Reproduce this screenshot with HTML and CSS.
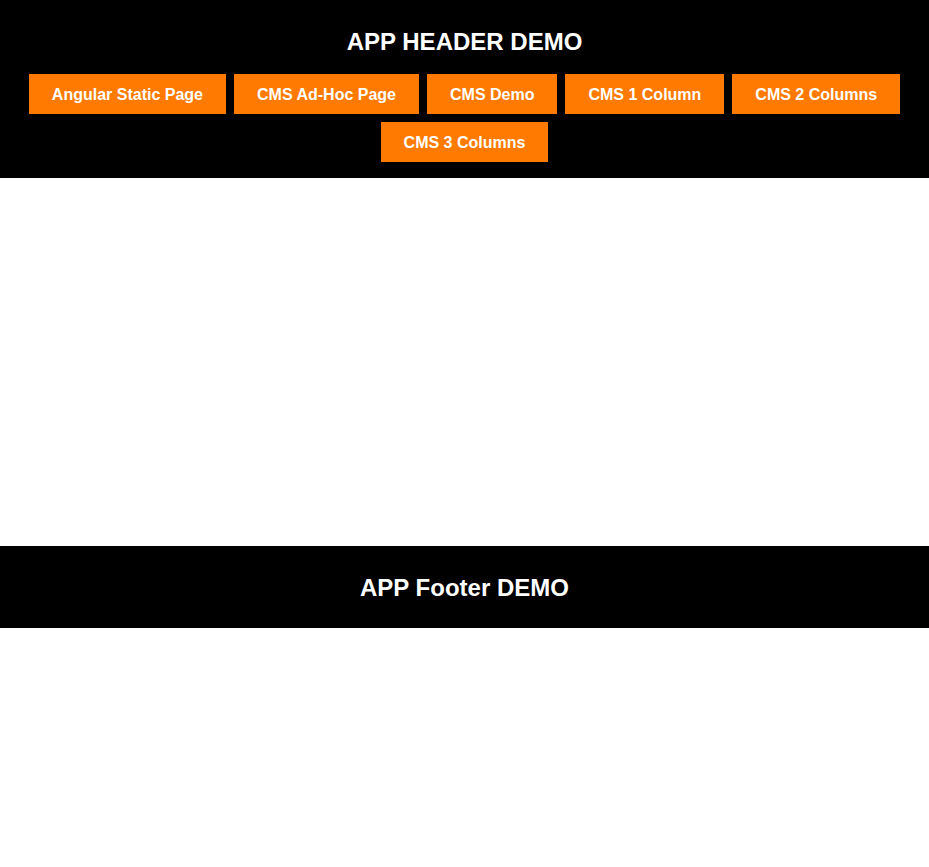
FILE: index.html
```html
<!DOCTYPE html>
<html lang="en">
<head>
<meta charset="utf-8">
<title>App Demo</title>
<link rel="stylesheet" href="styles.css">
</head>
<body>
<header class="app-header">
  <h1 class="app-title">APP HEADER DEMO</h1>
  <nav class="app-nav">
    <a class="nav-btn" href="#">Angular Static Page</a>
    <a class="nav-btn" href="#">CMS Ad-Hoc Page</a>
    <a class="nav-btn" href="#">CMS Demo</a>
    <a class="nav-btn" href="#">CMS 1 Column</a>
    <a class="nav-btn" href="#">CMS 2 Columns</a>
    <a class="nav-btn" href="#">CMS 3 Columns</a>
  </nav>
</header>
<main class="app-main"></main>
<footer class="app-footer">
  <h2 class="footer-title">APP Footer DEMO</h2>
</footer>
</body>
</html>
```

FILE: styles.css
```css
* { box-sizing: border-box; }
html, body { margin: 0; padding: 0; background: #fff; }
body { font-family: "Liberation Sans", Arial, Helvetica, sans-serif; }

.app-header {
  background: #000;
  color: #fff;
  padding: 28px 0 16px;
  display: flex;
  flex-direction: column;
  align-items: center;
  gap: 18px;
}
.app-title {
  margin: 0;
  font-size: 24px;
  line-height: 28px;
  font-weight: 700;
}
.app-nav {
  display: flex;
  flex-wrap: wrap;
  justify-content: center;
  gap: 8px;
  width: 100%;
  padding: 0 28px;
}
.nav-btn {
  display: flex;
  align-items: center;
  height: 40px;
  padding: 2px 23px 0;
  background: #ff7a00;
  color: #fff;
  font-size: 16px;
  font-weight: 700;
  text-decoration: none;
  white-space: nowrap;
}
.app-main { height: 368px; }
.app-footer {
  background: #000;
  color: #fff;
  height: 82px;
  padding-top: 2px;
  display: flex;
  align-items: center;
  justify-content: center;
}
.footer-title {
  margin: 0;
  font-size: 24px;
  line-height: 28px;
  font-weight: 700;
}
```
